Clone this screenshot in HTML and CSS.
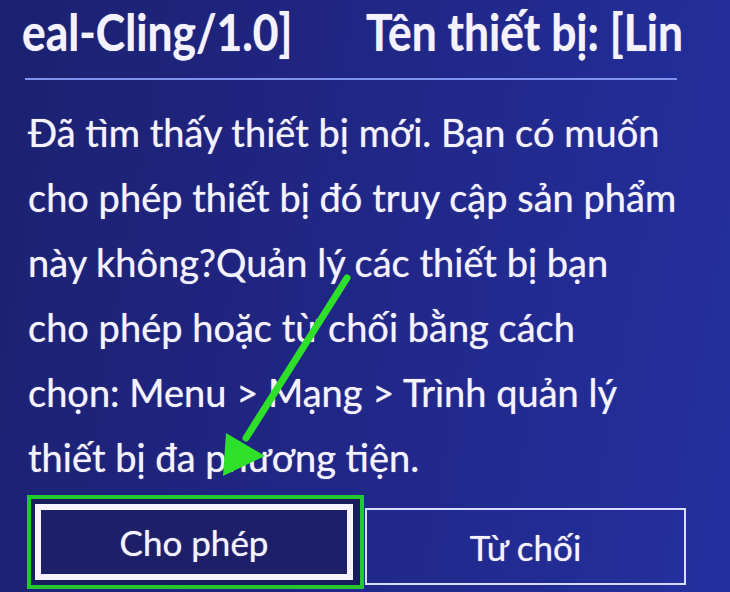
FILE: index.html
```html
<!DOCTYPE html>
<html lang="vi">
<head>
<meta charset="utf-8">
<title>Thiết bị mới</title>
<link rel="stylesheet" href="styles.css">
</head>
<body>
<div class="screen">
  <div class="header">
    <span class="head-item head-left">eal-Cling/1.0]</span>
    <span class="head-item head-right">Tên thiết bị: [Lin</span>
  </div>
  <div class="rule"></div>
  <div class="message">
    <div class="line">Đã tìm thấy thiết bị mới. Bạn có muốn</div>
    <div class="line">cho phép thiết bị đó truy cập sản phẩm</div>
    <div class="line">này không?Quản lý các thiết bị bạn</div>
    <div class="line">cho phép hoặc từ chối bằng cách</div>
    <div class="line">chọn: Menu &gt; Mạng &gt; Trình quản lý</div>
    <div class="line">thiết bị đa phương tiện.</div>
  </div>
  <div class="buttons">
    <div class="highlight">
      <div class="btn btn-focus">Cho phép</div>
    </div>
    <div class="btn btn-plain">Từ chối</div>
  </div>
  <svg class="arrow" width="730" height="592" viewBox="0 0 730 592">
    <line x1="347" y1="278" x2="246" y2="438" stroke="#2fe02a" stroke-width="7" stroke-linecap="round"/>
    <polygon points="223,476 226,433 265,456" fill="#2fe02a"/>
  </svg>
</div>
</body>
</html>
```
FILE: styles.css
```css
html, body {
  margin: 0;
  padding: 0;
}
body {
  width: 730px;
  height: 592px;
  overflow: hidden;
  background: #1f2580;
}
.screen {
  position: relative;
  width: 730px;
  height: 592px;
  overflow: hidden;
  background: linear-gradient(100deg, #1b2170 0%, #202684 45%, #2430a0 100%);
  color: #f4f2ff;
  font-family: Lato, "Open Sans", "DejaVu Sans", sans-serif;
}
.header {
  display: flex;
  height: 67px;
  padding-left: 22px;
  align-items: flex-end;
  white-space: nowrap;
  font-size: 51px;
  line-height: 70px;
  font-weight: 700;
  text-shadow: 0 0 1px rgba(255,255,255,0.6);
}
.head-item {
  display: inline-block;
  transform-origin: left bottom;
  transform: scaleX(0.87);
}
.head-left {
  width: 346px;
}
.rule {
  margin: 11px 53px 0 25px;
  height: 2px;
  background: #7f92ee;
}
.message {
  padding: 20px 0 0 28px;
  font-size: 38px;
  line-height: 65px;
  white-space: nowrap;
  text-shadow: 0 0 1px rgba(255,255,255,0.7);
}
.line {
  height: 65px;
}
.buttons {
  display: flex;
  margin-top: 5px;
  padding-left: 27px;
}
.highlight {
  border: 4px solid #25c82c;
  padding: 5px 7px 4px 4px;
  width: 337px;
  height: 94px;
  box-sizing: border-box;
  background: #181d5e;
}
.btn {
  display: flex;
  align-items: center;
  justify-content: center;
  box-sizing: border-box;
  font-size: 35px;
  text-shadow: 0 0 1px rgba(255,255,255,0.7);
}
.btn-focus {
  height: 76px;
  border: 6px solid #f7f4ff;
  background: #1d2068;
}
.btn-plain {
  margin-top: 13px;
  width: 321px;
  height: 77px;
  border: 2px solid #d8dcff;
  margin-left: 1px;
}
.arrow {
  position: absolute;
  left: 0;
  top: 0;
}
```
